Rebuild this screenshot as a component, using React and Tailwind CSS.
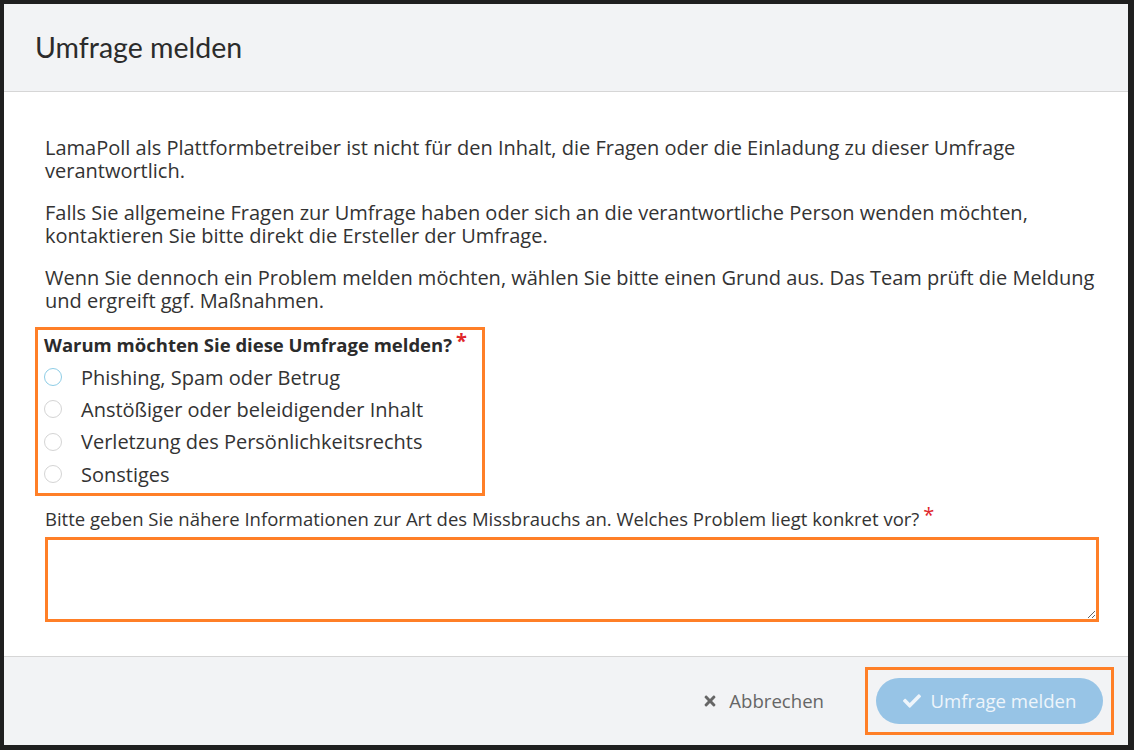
import { FaCheck, FaTimes } from 'react-icons/fa'

const reasons = [
  'Phishing, Spam oder Betrug',
  'Anstößiger oder beleidigender Inhalt',
  'Verletzung des Persönlichkeitsrechts',
  'Sonstiges',
]

export default function App() {
  return (
    <div className="h-[750px] w-full bg-[#1f1f1f] pt-[4px] pl-[4px] pr-[6px] pb-[5px]" style={{ fontFamily: '"Open Sans", sans-serif' }}>
      <div className="flex h-full flex-col bg-white">
        <div className="flex h-[88px] shrink-0 items-center border-b border-[#d6d6d6] bg-[#f2f3f5] px-[31px]">
          <h1 className="text-[28.5px] text-[#2b2b2b]" style={{ fontFamily: 'Lato, sans-serif' }}>Umfrage melden</h1>
        </div>

        <div className="flex-1 pl-[41px] pr-[29px] pt-[44px] text-[20px] leading-[23px] text-[#333]">
          <p>LamaPoll als Plattformbetreiber ist nicht für den Inhalt, die Fragen oder die Einladung zu dieser Umfrage verantwortlich.</p>
          <p className="mt-[19px]">Falls Sie allgemeine Fragen zur Umfrage haben oder sich an die verantwortliche Person wenden möchten, kontaktieren Sie bitte direkt die Ersteller der Umfrage.</p>
          <p className="mt-[19px]">Wenn Sie dennoch ein Problem melden möchten, wählen Sie bitte einen Grund aus. Das Team prüft die Meldung und ergreift ggf. Maßnahmen.</p>

          <div className="-ml-[10px] mt-[15px] w-[450px] border-[3px] border-[#ff7f27] px-[6px] pt-[3px] pb-[3px]">
            <p className="text-[18.5px] font-bold text-[#2b2b2b]">
              Warum möchten Sie diese Umfrage melden?<span className="relative -top-[4px] ml-[4px] text-[20px] text-[#e0262b]">*</span>
            </p>
            <div className="mt-[5px] flex flex-col">
              {reasons.map((r, i) => (
                <label key={r} className="flex h-[32.3px] items-center">
                  <span className={`h-[18px] w-[18px] rounded-full border bg-white ${i === 0 ? 'border-[#8ecde6]' : 'border-[#d4d4d4]'}`} />
                  <span className="ml-[19px]">{r}</span>
                </label>
              ))}
            </div>
          </div>

          <p className="mt-[11px] text-[18.5px] text-[#333]">
            Bitte geben Sie nähere Informationen zur Art des Missbrauchs an. Welches Problem liegt konkret vor?<span className="relative -top-[4px] ml-[4px] text-[20px] text-[#e0262b]">*</span>
          </p>
          <textarea className="mt-[7px] block h-[85px] w-full resize-y border-[3px] border-[#ff7f27] outline-none" />
        </div>

        <div className="flex h-[89px] shrink-0 items-center justify-end border-t border-[#d6d6d6] bg-[#f2f3f5] pr-[14px]">
          <button className="mr-[41px] flex items-center text-[18.6px] text-[#666]">
            <FaTimes className="mr-[12px] h-[16px] w-[14px]" />
            Abbrechen
          </button>
          <div className="border-[3px] border-[#ff7f27] p-[8px]">
            <button className="flex h-[46px] w-[227px] items-center justify-center rounded-full bg-[#97c4e6] text-[18.6px] text-[#eef5fb]">
              <FaCheck className="mr-[10px] h-[18px] w-[18px]" />
              Umfrage melden
            </button>
          </div>
        </div>
      </div>
    </div>
  )
}
